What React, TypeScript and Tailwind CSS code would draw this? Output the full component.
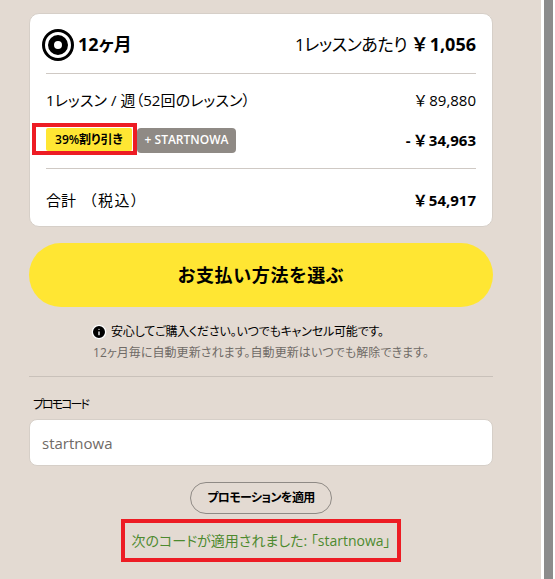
import { Info } from "lucide-react"

const font = { fontFamily: '"Open Sans", "Noto Sans CJK JP", sans-serif' }

function Yen() {
  return <span className="mr-[3px]">￥</span>
}

export default function App() {
  return (
    <div className="flex h-[579px] w-[555px] overflow-hidden bg-white [font-feature-settings:'palt']" style={font}>
      <div className="w-[541px] shrink-0 bg-[#e3dad2] pl-[29px] pr-[48px] pt-[13px]">
        {/* Plan card */}
        <div className="h-[214px] w-[464px] rounded-[10px] border border-[#d6cfc8] bg-white px-[16px]">
          <div className="flex h-[59px] items-center justify-between pt-[2px]">
            <div className="-ml-[4px] flex items-center gap-[4px]">
              <div className="flex h-[32px] w-[32px] items-center justify-center rounded-full border-[3px] border-black bg-white">
                <div className="h-[20px] w-[20px] rounded-full border-[6px] border-black" />
              </div>
              <span className="text-[18px] font-bold text-black">12ヶ月</span>
            </div>
            <div className="text-[17px] tracking-[-0.4px] text-black">
              1レッスンあたり<span className="ml-[6px] text-[18px] font-bold tracking-normal"><Yen />1,056</span>
            </div>
          </div>
          <div className="border-t border-[#cfc9c4]" />
          <div className="mb-[1px] flex h-[52px] items-center justify-between text-[15px] text-black">
            <span className="tracking-[0.1px]">1レッスン / 週（52回のレッスン）</span>
            <span><Yen />89,880</span>
          </div>
          <div className="flex h-[26px] items-center justify-between">
            <div className="flex items-start gap-[5px]">
              {/* red highlight sits over the badge */}
              <div className="relative">
                <span className="flex h-[23px] w-[86px] items-center justify-center rounded-[2px] bg-[#ffe633] pt-[2px] text-[12px] font-semibold text-black">39%割り引き</span>
                <div className="absolute -bottom-[4px] -left-[14px] -right-[5px] -top-[5px] border-[4px] border-[#ed1c24]" />
              </div>
              <span className="flex h-[25px] w-[99px] items-center justify-center rounded-[4px] bg-[#8f8a85] text-[12px] font-semibold text-white">+ STARTNOWA</span>
            </div>
            <span className="text-[15px] font-bold text-black">- <Yen />34,963</span>
          </div>
          <div className="mt-[15px] border-t border-[#cfc9c4]" />
          <div className="flex h-[62px] items-center justify-between text-[15px] text-black">
            <span>合計<span className="ml-[13px] tracking-[1.5px]">（税込）</span></span>
            <span className="font-bold"><Yen />54,917</span>
          </div>
        </div>

        {/* Pay button */}
        <button className="mt-[16px] flex h-[64px] w-[464px] items-center justify-center rounded-full bg-[#ffe633] text-[18px] font-bold tracking-[0.7px] text-black">
          お支払い方法を選ぶ
        </button>

        {/* Notes */}
        <div className="mx-auto mt-[16px] w-fit text-[12px]">
          <div className="-ml-[2px] flex items-center gap-[4px] text-black">
            <Info className="h-[16px] w-[16px] fill-black text-white" />
            <span className="tracking-[-0.2px]">安心してご購入ください。いつでもキャンセル可能です。</span>
          </div>
          <div className="mt-[3px] tracking-[0.07px] text-[#6f6a66]">12ヶ月毎に自動更新されます。自動更新はいつでも解除できます。</div>
        </div>
        <div className="mt-[14px] border-t border-[#c9c1ba]" />

        {/* Promo */}
        <div className="mt-[19px] pl-[4px] text-[12px] tracking-[-2px] text-black">プロモコード</div>
        <div className="mt-[5px] flex h-[47px] w-[464px] items-center rounded-[8px] border border-[#d6cfc8] bg-white px-[12px] pt-[2px] text-[15px] text-[#6f6a66]">
          startnowa
        </div>
        <div className="mt-[16px] flex justify-center">
          <button className="h-[32px] w-[142px] rounded-full border border-[#8f8a85] text-[12px] font-semibold tracking-[-0.6px] text-black">
            プロモーションを適用
          </button>
        </div>
        <div className="relative mt-[16px] flex justify-center">
          <span className="text-[14px] leading-[22px] text-[#4d8a2f]">次のコードが適用されました: 「startnowa」</span>
          <div className="absolute -bottom-[10px] -top-[11px] left-[92px] right-[92px] border-[4px] border-[#ed1c24]" />
        </div>
      </div>
      <div className="w-[3px] shrink-0 bg-white" />
      <div className="w-[9px] shrink-0 bg-[#8c8c8c]" />
      <div className="flex-1 bg-white" />
    </div>
  )
}
